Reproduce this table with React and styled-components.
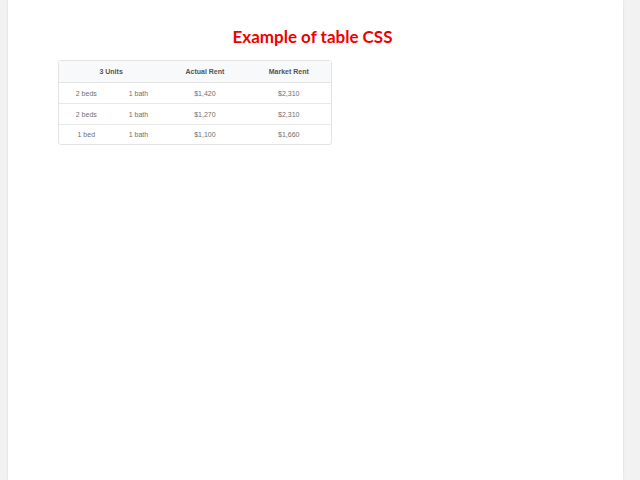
import styled, { createGlobalStyle } from "styled-components";

const GlobalStyle = createGlobalStyle`
  html, body {
    margin: 0;
    padding: 0;
    background: #f2f2f2;
  }
`;

const Page = styled.div`
  margin-left: 8px;
  width: 615px;
  min-height: 480px;
  background: #ffffff;
  box-shadow: 0 0 2px rgba(0, 0, 0, 0.12);
  padding-top: 26px;
  box-sizing: border-box;
`;

const Title = styled.h1`
  margin: 0 0 12px;
  padding-right: 6px;
  text-align: center;
  font-family: Lato, "Open Sans", sans-serif;
  font-size: 17px;
  line-height: 22px;
  font-weight: 700;
  color: #f00000;
`;

const Table = styled.table`
  margin-left: 50px;
  width: 274px;
  border-collapse: separate;
  border-spacing: 0;
  border: 1px solid #e3e3e3;
  border-radius: 3px;
  font-family: "Liberation Sans", Arial, sans-serif;
  font-size: 7px;
  color: #6f6f6f;
`;

const HeadCell = styled.th`
  height: 21px;
  padding: 0;
  background: #f8f9fa;
  border-bottom: 1px solid #e3e3e3;
  font-weight: 700;
  color: #555;
  text-align: center;
`;

const Cell = styled.td`
  height: ${(p) => p.$h}px;
  padding: 0;
  text-align: center;
  border-top: ${(p) => (p.$first ? "none" : "1px solid #e9e9e9")};
`;

const units = [
  { beds: "2 beds", baths: "1 bath", actual: "$1,420", market: "$2,310" },
  { beds: "2 beds", baths: "1 bath", actual: "$1,270", market: "$2,310" },
  { beds: "1 bed", baths: "1 bath", actual: "$1,100", market: "$1,660" },
];

const rowHeights = [20, 20, 19];

export default function App() {
  return (
    <>
      <GlobalStyle />
      <Page>
        <Title>Example of table CSS</Title>
        <Table>
          <colgroup>
            <col style={{ width: 55 }} />
            <col style={{ width: 50 }} />
            <col style={{ width: 84 }} />
            <col style={{ width: 85 }} />
          </colgroup>
          <thead>
            <tr>
              <HeadCell colSpan={2}>3 Units</HeadCell>
              <HeadCell>Actual Rent</HeadCell>
              <HeadCell>Market Rent</HeadCell>
            </tr>
          </thead>
          <tbody>
            {units.map((u, i) => (
              <tr key={i}>
                <Cell $first={i === 0} $h={rowHeights[i]}>{u.beds}</Cell>
                <Cell $first={i === 0} $h={rowHeights[i]}>{u.baths}</Cell>
                <Cell $first={i === 0} $h={rowHeights[i]}>{u.actual}</Cell>
                <Cell $first={i === 0} $h={rowHeights[i]}>{u.market}</Cell>
              </tr>
            ))}
          </tbody>
        </Table>
      </Page>
    </>
  );
}
